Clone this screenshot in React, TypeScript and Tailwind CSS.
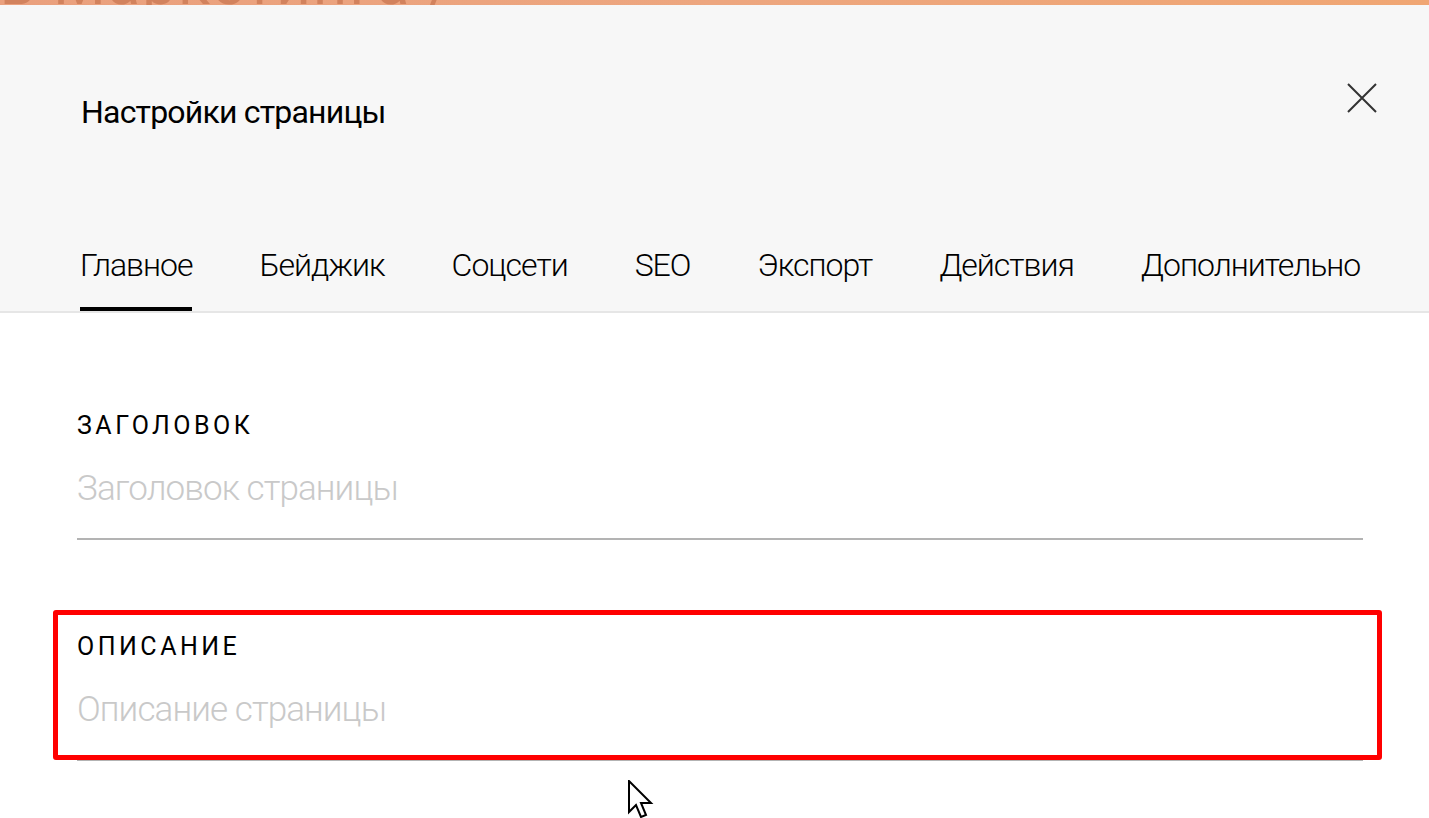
import React from 'react';

const tabs = ['Главное', 'Бейджик', 'Соцсети', 'SEO', 'Экспорт', 'Действия', 'Дополнительно'];

const fields = [
    { label: 'Заголовок', placeholder: 'Заголовок страницы' },
    { label: 'Описание', placeholder: 'Описание страницы' },
];

export default function App() {
    return (
        <div className="relative h-[818px] w-full overflow-hidden bg-white font-['Roboto','Liberation_Sans',sans-serif] text-black">
            {/* page behind the popup, only its bottom edge shows */}
            <div className="relative h-[5px] overflow-hidden bg-gradient-to-r from-[#eaa07d] via-[#eda67f] to-[#f0a673]">
                <div className="-mt-[46px] h-[51px] whitespace-nowrap text-[60px] leading-none tracking-[2px] text-[#d2825d]">
                    в Маркетинга /
                </div>
            </div>

            {/* header */}
            <div className="border-b-2 border-[#e6e6e6] bg-[#f7f7f7] pl-[80px] pr-[52px] pt-[78px]">
                <div className="flex items-start justify-between">
                    <h1 className="mt-[13px] pl-[1px] text-[32px] leading-none font-normal tracking-[-0.8px]">Настройки страницы</h1>
                    <button className="h-[30px] w-[30px] text-[#333]">
                        <svg viewBox="0 0 30 30" width="30" height="30" fill="none" stroke="currentColor" strokeWidth="2">
                            <path d="M1 1 L29 29 M29 1 L1 29" />
                        </svg>
                    </button>
                </div>

                <div className="mt-[121px] flex gap-[67px]">
                    {tabs.map((t, i) => (
                        <div
                            key={t}
                            className={
                                i === 0
                                    ? 'border-b-4 border-black pb-[26px] text-[32px] leading-none font-light tracking-[-1px]'
                                    : 'border-b-4 border-transparent pb-[26px] text-[32px] leading-none font-light tracking-[-1px]'
                            }
                        >
                            {t}
                        </div>
                    ))}
                </div>
            </div>

            {/* fields */}
            <div className="pl-[77px] pr-[66px] pt-[100px]">
                {fields.map((f, i) => (
                    <div key={f.label} className={i > 0 ? 'mt-[94px]' : ''}>
                        <div className="text-[25px] leading-none uppercase tracking-[0.14em]">{f.label}</div>
                        <input
                            className="mt-[30px] block w-full border-b-2 border-[#b3b3b3] bg-transparent pb-[29px] text-[35px] leading-none font-light tracking-[-0.9px] outline-none placeholder:text-[#c9c9c9]"
                            placeholder={f.placeholder}
                        />
                    </div>
                ))}
            </div>

            {/* red highlight drawn over the screenshot */}
            <div className="pointer-events-none absolute left-[53px] top-[610px] h-[150px] w-[1329px] rounded-[3px] border-[5px] border-[#ff0000]" />

            {/* mouse cursor */}
            <svg className="pointer-events-none absolute left-[628px] top-[780px]" width="26" height="42" viewBox="0 0 13 21">
                <path d="M0.5 0.5 L0.5 16 L4 12.5 L6.5 18.5 L9 17.5 L6.5 11.5 L11.5 11.5 Z" fill="white" stroke="black" strokeWidth="1" strokeLinejoin="miter" />
            </svg>
        </div>
    );
}
